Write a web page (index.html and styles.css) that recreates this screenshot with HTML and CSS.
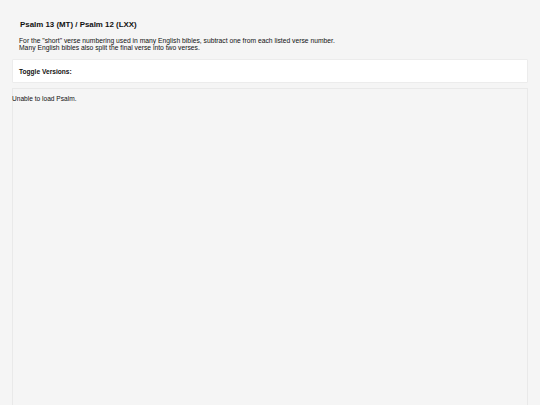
FILE: index.html
```html
<!DOCTYPE html>
<html lang="en">
<head>
    <meta charset="UTF-8">
    <title>Psalm 13</title>
    <link rel="stylesheet" href="styles.css">
</head>
<body>
<div class="page">
    <div class="psalm-head">
        <h1 class="psalm-title">Psalm 13 (MT) / Psalm 12 (LXX)</h1>
        <p class="psalm-note">For the "short" verse numbering used in many English bibles, subtract one from each listed verse number.<br>Many English bibles also split the final verse into two verses.</p>
    </div>
    <div class="toggle-card">
        <span class="toggle-label">Toggle Versions:</span>
    </div>
    <div class="psalm-body">
        <p class="psalm-error">Unable to load Psalm.</p>
    </div>
</div>
</body>
</html>
```

FILE: styles.css
```css
html,body{
    margin:0;
}
body{
    height:405px;
    background-color:#f5f5f5;
    font-family:"Liberation Sans", Arial, sans-serif;
    color:#111;
    overflow:hidden;
}
.page{
    padding:0 12px;
}
.psalm-head{
    padding:19px 7px 0;
}
.psalm-title{
    margin:0 0 0 1px;
    font-size:7.9px;
    line-height:11px;
    font-weight:bold;
}
.psalm-note{
    margin:7px 0 0;
    font-size:6.75px;
    line-height:7.2px;
}
.toggle-card{
    margin-top:8px;
    height:24px;
    box-sizing:border-box;
    background-color:#fff;
    border:1px solid #ececec;
    border-radius:1px;
    display:flex;
    align-items:center;
    padding-left:6px;
}
.toggle-label{
    font-size:6.6px;
    font-weight:bold;
}
.psalm-body{
    margin-top:5px;
    height:318px;
    border:1px solid #e9e9e9;
    border-bottom:0;
}
.psalm-error{
    margin:6px 0 0 -1px;
    font-size:6.6px;
    line-height:8px;
}
```
